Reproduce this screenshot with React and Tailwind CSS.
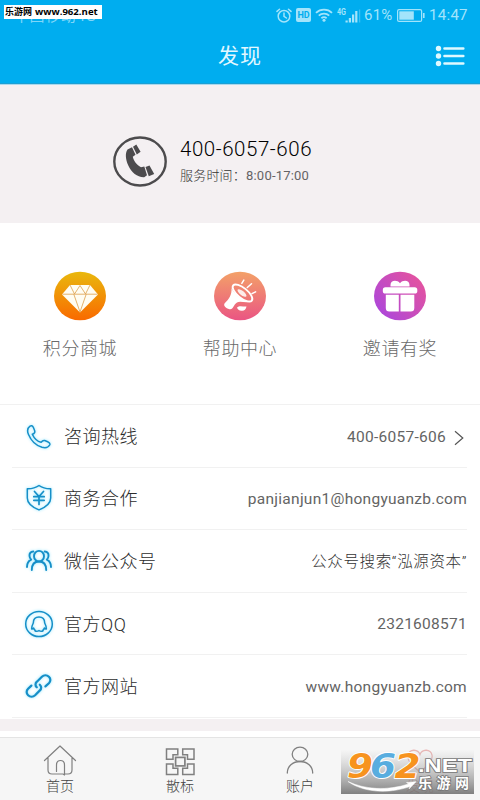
const STACK = "font-['Roboto','Noto_Sans_CJK_SC',sans-serif]"

function StatusBar() {
  return (
    <div className="relative flex h-[30px] items-center justify-end pr-[11px] text-[#a3e4fb]">
      <span className="absolute left-[14px] top-[8px] text-[15px] leading-[17px] tracking-[0.6px] text-[#7fd6f8]">中国移动4G</span>
      <div className="absolute left-[4px] top-[5px] flex h-[14px] w-[98px] items-center whitespace-nowrap bg-white pl-[1px] font-['Open_Sans','Noto_Sans_CJK_SC',sans-serif] text-[9.6px] font-bold leading-[14px] text-black">
        <span className="text-[9px]">乐游网</span>
        <span className="ml-[3px]">www.962.net</span>
      </div>
      <svg className="h-[15px] w-[16px]" viewBox="0 0 16 15" fill="none" stroke="currentColor" strokeWidth="1.5" strokeLinecap="round">
        <circle cx="8" cy="8.2" r="5.8" />
        <path d="M8 5v3.4l2.4 1.6M1 3.4 3.5 1.2M15 3.4 12.5 1.2" />
      </svg>
      <span className="ml-[4px] flex h-[14px] w-[15px] items-center justify-center rounded-[2px] bg-[#a3e4fb] text-[9px] font-bold leading-none tracking-tight text-[#00adef]">HD</span>
      <svg className="ml-[4px] h-[14px] w-[18px]" viewBox="0 0 18 14" fill="none" stroke="currentColor" strokeWidth="1.8">
        <path d="M1 4.8a11.500 11.500 0 0 1 16 0M3.800 7.600a7.600 7.600 0 0 1 10.400 0M6.400 10.200a4 4 0 0 1 5.200 0" />
        <circle cx="9" cy="12.300" r="1.500" fill="currentColor" stroke="none" />
      </svg>
      <svg className="ml-[4px] h-[15px] w-[24px]" viewBox="0 0 24 15" fill="currentColor">
        <text x="0" y="7" fontSize="8.5" fontWeight="700" textLength="9" lengthAdjust="spacingAndGlyphs">4G</text>
        <path d="M8.500 12.500h2.200v2h-2.200zM11.800 10h2.200v4.500h-2.200zM15 6.500h2.200v8h-2.200zM18.200 3h2.200v11.500h-2.200z" />
        <path d="M22.200 1.500h1v13h-1z" opacity=".45" />
      </svg>
      <span className="ml-[3px] w-[29px] text-[15px] leading-none tracking-[0.2px]">61%</span>
      <svg className="ml-[4px] h-[13px] w-[28px]" viewBox="0 0 28 13">
        <rect x=".6" y=".6" width="24" height="11.800" rx="1.500" fill="none" stroke="currentColor" strokeWidth="1.2" />
        <rect x="2.300" y="2.300" width="14.500" height="8.400" fill="currentColor" />
        <path d="M26 4h1.600v5H26z" fill="currentColor" />
      </svg>
      <span className="ml-[4px] w-[40px] whitespace-nowrap text-[15px] leading-none tracking-[0.3px]">14:47</span>
    </div>
  )
}

function Header() {
  return (
    <header className="h-[85px] border-b border-[#a9d9ee] bg-[#00adef] shadow-[inset_0_-1px_0_#1b9fd4]">
      <StatusBar />
      <div className="relative flex h-[54px] items-center justify-center">
        <h1 className="text-[21px] tracking-[1px] text-[#e3f8ff]">发现</h1>
        <svg className="absolute right-[14px] top-[15px] h-[22px] w-[31px]" viewBox="0 0 31 22" fill="#dff9ff">
          <circle cx="3.500" cy="3.500" r="2.700" />
          <circle cx="3.500" cy="11" r="2.700" />
          <circle cx="3.500" cy="18.500" r="2.700" />
          <path d="M9.500 3.500h18.800M9.500 11h18.800M9.500 18.500h18.800" stroke="#dff9ff" strokeWidth="2.600" strokeLinecap="round" />
        </svg>
      </div>
    </header>
  )
}

function ServiceBanner() {
  return (
    <section className="flex h-[138px] items-center bg-[#f4f0f2] pl-[113px] pt-[14px]">
      <svg className="h-[51px] w-[54px]" viewBox="0 0 54 51">
        <ellipse cx="27" cy="25.500" rx="25.700" ry="24" fill="none" stroke="#4c4b4d" strokeWidth="2.400" />
        <path d="M14.500 13.500 19 11.300 22.500 18.800 19.800 20.800C20.600 25 23.800 29 28 31.200L31.300 30.400 34 39.200 31.200 41.200C24.500 41.500 18.500 36.500 15.300 29.500 12.600 23.500 11.900 17 14.500 13.500Z" fill="#4c4b4d" />
        <path d="M20 10.800 23.300 8.600 27.600 15.800 23.800 18.500ZM32.500 31 36.500 29.600 41.200 38 35.800 40.300Z" fill="#4c4b4d" />
      </svg>
      <div className="ml-[13px]">
        <div className="text-[20.5px] font-light leading-[24px] tracking-[0.55px] text-black">400-6057-606</div>
        <div className="mt-[6px] text-[13px] leading-[18px] tracking-[0.2px]"><span className="font-light text-[#333]">服务时间：</span><span className="text-[#656365]">8:00-17:00</span></div>
      </div>
    </section>
  )
}

function DiamondIcon() {
  return (
    <svg className="h-[50px] w-[54px]" viewBox="0 0 54 50">
      <defs>
        <linearGradient id="gold" x1="0" y1="0" x2="0" y2="1">
          <stop offset="0" stopColor="#e9b80d" />
          <stop offset="1" stopColor="#f96a00" />
        </linearGradient>
      </defs>
      <ellipse cx="27" cy="25" rx="26" ry="24.300" fill="url(#gold)" />
      <path d="M17 14h20l8 9.500L27 41.500 9 23.500Z" fill="#fffdf2" />
      <path d="M9.500 23.200h35M17 14l4.500 9 5.500-8.500 5.500 8.500 4.500-9M20.800 23.200 27 41l6.200-17.800" fill="none" stroke="#dda04a" strokeWidth=".8" />
    </svg>
  )
}

function HornIcon() {
  return (
    <svg className="h-[50px] w-[54px]" viewBox="0 0 54 50">
      <defs>
        <linearGradient id="coral" x1="0" y1="0" x2="0" y2="1">
          <stop offset="0" stopColor="#f3a168" />
          <stop offset="1" stopColor="#ea5583" />
        </linearGradient>
      </defs>
      <ellipse cx="27" cy="25" rx="26" ry="24.300" fill="url(#coral)" />
      <path d="M18.500 17C19 24 16 28 11.500 32.500 10.300 34.500 12.500 37.500 16.500 38.200 20.500 39 20 34 24 31.500 27 29.800 31.500 32 36.500 31 28 29 20.500 22 18.500 17Z" fill="#fff" />
      <ellipse cx="29.500" cy="22" rx="12" ry="5" transform="rotate(39 29.500 22)" fill="none" stroke="#fff" strokeWidth="1.900" />
      <ellipse cx="29" cy="22" rx="5.500" ry="2.100" transform="rotate(39 29 22)" fill="#fff" opacity=".85" />
      <path d="M24 36.500C26.500 34 30 35.800 33.500 35.500 33 38.500 31 40.200 28.500 39.800 26 39.500 24.500 38.500 24 36.500Z" fill="#fff" />
      <path d="m28.800 12.300 2-3.200M34.300 16.500l4.200-3.800M39 22.700l3.600-1.800" stroke="#fff" strokeWidth="1.500" strokeLinecap="round" />
    </svg>
  )
}

function GiftIcon() {
  return (
    <svg className="h-[50px] w-[54px]" viewBox="0 0 54 50">
      <defs>
        <linearGradient id="violet" x1="1" y1="0.100" x2="0" y2="0.900">
          <stop offset="0" stopColor="#e9549a" />
          <stop offset="1" stopColor="#a846df" />
        </linearGradient>
      </defs>
      <ellipse cx="27" cy="25" rx="26" ry="24.300" fill="url(#violet)" />
      <path d="M17.500 15.500V14c0-5 6.500-5.500 9.500-1.800C30 8.500 36.500 9 36.500 14v1.500Z" fill="#fff" />
      <rect x="9.800" y="16.300" width="34.500" height="6.200" rx="2.600" fill="#fff" />
      <path d="M12.800 23.700h13v16.800h-9.500a3.500 3.500 0 0 1-3.500-3.500ZM27.500 23.700h13.800V37a3.500 3.500 0 0 1-3.500 3.500H27.500Z" fill="#fff" />
    </svg>
  )
}

const shortcuts = [
  { label: '积分商城', Icon: DiamondIcon },
  { label: '帮助中心', Icon: HornIcon },
  { label: '邀请有奖', Icon: GiftIcon },
]

function Shortcuts() {
  return (
    <section className="grid h-[182px] grid-cols-3 border-b border-[#f1f1f1] pt-[48px]">
      {shortcuts.map(({ label, Icon }) => (
        <div key={label} className="flex flex-col items-center">
          <Icon />
          <span className="mt-[15px] text-[18px] font-light leading-[26px] tracking-[0.6px] text-[#6a6a6a]">{label}</span>
        </div>
      ))}
    </section>
  )
}

function LineIcon({ children }) {
  return (
    <svg className="h-[28px] w-[30px] shrink-0 drop-shadow-[0_0_1.5px_#8fe6ff]" viewBox="0 0 30 28" fill="none" stroke="#168fc8" strokeWidth="1.500" strokeLinejoin="round" strokeLinecap="round">
      {children}
    </svg>
  )
}

const icons = {
  phone: (
    <path d="M6 4.200C3.500 6 3 9 4.500 12.500 7 18.500 12 23.500 18 25.300c3.300.9 6.300.2 7.700-2.300.6-1.300-.3-2.500-2-3.300l-3-1.200c-1.500-.4-2.500.2-3.600 1.800C13.500 19.500 10 16 8.300 12.300 10.800 11.300 11.200 10 10.500 8.300L9.300 5.300C8.500 3.500 7.300 3.200 6 4.200Z" />
  ),
  shield: (
    <>
      <path d="M15 1.500c3.400 2.400 7.300 3.300 11.700 3.200v9.200c0 5.200-5.200 9.300-11.700 12C8.500 23.200 3.300 19.100 3.300 13.900V4.700C7.700 4.800 11.600 3.900 15 1.500Z" />
      <path d="m10.500 7.500 4.500 5 4.500-5M15 12.500v8M9.800 12.700h10.400M9.800 16.300h10.400" strokeWidth="1.700" />
    </>
  ),
  people: (
    <g strokeWidth="1.900">
      <ellipse cx="15" cy="9.200" rx="5" ry="5.300" />
      <path d="M7.800 23c0-5.300 2.700-8.500 7.200-8.500s7.200 3.200 7.200 8.500M9.300 4.500C6.500 4.800 5.300 6.500 5.500 9c.1 1.500.7 2.700 1.700 3.700C4.500 14 3 16.800 3 20M20.700 4.500c2.800.3 4 2 3.800 4.500-.1 1.500-.7 2.700-1.700 3.700 2.700 1.300 4.200 4.100 4.200 7.300" />
    </g>
  ),
  qq: (
    <>
      <ellipse cx="15" cy="14" rx="13.300" ry="12.600" />
      <path d="M15 7c-4 0-5.700 2.900-5.700 6-1 2-2 4-1.700 5.800.6.500 1.400-.1 2-.8.3 1.100.8 1.700 1.600 2.300-.8.700.4 1 1.600 1 1 0 1.600-.3 2.200-.7.600.4 1.200.7 2.200.7 1.200 0 2.400-.3 1.600-1 .8-.6 1.300-1.200 1.600-2.300.6.700 1.400 1.300 2 .8.300-1.800-.7-3.800-1.700-5.800 0-3.100-1.700-6-5.700-6Z" />
    </>
  ),
  link: (
    <g strokeWidth="2.200">
      <path d="m12.800 15.300c-1.800-1.600-1.700-4.100.1-5.600l5-4.900c2-1.900 5-1.900 7 0s1.900 4.500 0 6.400l-3.500 3.200" />
      <path d="m15.800 12.700c1.800 1.600 1.900 4.100.1 5.700l-4.800 4.800c-2 1.900-5 1.900-7 0s-1.900-4.500 0-6.400l3.300-3.200" />
    </g>
  ),
}

const contacts = [
  { icon: 'phone', label: '咨询热线', value: '400-6057-606', arrow: true },
  { icon: 'shield', label: '商务合作', value: 'panjianjun1@hongyuanzb.com' },
  { icon: 'people', label: '微信公众号', value: '公众号搜索“泓源资本”', cjk: true },
  { icon: 'qq', label: '官方QQ', value: '2321608571' },
  { icon: 'link', label: '官方网站', value: 'www.hongyuanzb.com' },
]

function ContactList() {
  return (
    <section className="pl-[12px] pr-[13px]">
      {contacts.map((c) => (
        <div key={c.icon} className="flex h-[62.6px] items-center border-b border-[#f1f1f1] pl-[12px]">
          <LineIcon>{icons[c.icon]}</LineIcon>
          <span className="ml-[10px] whitespace-nowrap pt-[1px] text-[18px] font-light tracking-[0.5px] text-[#2c2c2c]">{c.label}</span>
          <span className={`ml-auto whitespace-nowrap pt-[3px] text-[15.5px] ${c.cjk ? 'font-light tracking-[0.64px] text-[#333]' : 'tracking-[0.27px] text-[#646464]'}`}>{c.value}</span>
          {c.arrow && (
            <svg className="ml-[8px] mr-[3px] mt-[4px] h-[16px] w-[10px]" viewBox="0 0 10 16" fill="none" stroke="#555" strokeWidth="1.200">
              <path d="m1 1.200 7.800 6.800L1 14.800" />
            </svg>
          )}
        </div>
      ))}
    </section>
  )
}

function HomeIcon() {
  return (
    <svg className="h-[32px] w-[34px]" viewBox="0 0 34 32" fill="none" stroke="#808080" strokeWidth="1.200" strokeLinecap="round" strokeLinejoin="round">
      <path d="M1.500 16.500 17 2l15.500 14.500M5 14v12c0 2.500 1.200 4 4 4h11l1.500 1V21c0-2.800-1.500-4.500-4-4.500s-4 1.700-4 4.500v6.500M21.500 30H25c2.800 0 4-1.500 4-4V14" />
    </svg>
  )
}

function GridIcon() {
  return (
    <svg className="h-[32px] w-[34px]" viewBox="0 0 34 32" fill="none" stroke="#808080" strokeWidth="1.500">
      <path d="M3.500 5h11.300v5.800H10v4.500H3.500ZM19.700 5H31v10.300h-6.500v-4.500h-4.800ZM3.500 20H10v4.300h4.800V30.500H3.500ZM24.500 20H31v10.500H19.700v-6.200h4.800Z" />
      <rect x="12.600" y="13.400" width="9.300" height="8.500" strokeWidth="1.700" />
    </svg>
  )
}

function UserIcon() {
  return (
    <svg className="h-[32px] w-[34px]" viewBox="0 0 34 32" fill="none" stroke="#808080" strokeWidth="1.300" strokeLinecap="round">
      <ellipse cx="17" cy="10.300" rx="7.800" ry="7.200" />
      <path d="M4.300 29c0-6.500 5.300-11.500 12.700-11.500S29.700 22.500 29.700 29" />
    </svg>
  )
}

function HeartIcon() {
  return (
    <svg className="h-[32px] w-[34px]" viewBox="0 0 34 32" fill="none" stroke="#db6b68" strokeWidth="1.200">
      <path d="M17 10.500C15 5 6.500 5 5 11c-1.300 7 6 12 12 17 6-5 13.300-10 12-17-1.500-6-10-6-12-.5Z" />
    </svg>
  )
}

const tabs = [
  { label: '首页', Icon: HomeIcon },
  { label: '散标', Icon: GridIcon },
  { label: '账户', Icon: UserIcon },
  { label: '发现', Icon: HeartIcon, active: true },
]

function TabBar() {
  return (
    <nav className="grid h-[63px] grid-cols-4 border-t border-[#e4e4e4] bg-[#f6f6f6] pt-[6px]">
      {tabs.map(({ label, Icon, active }) => (
        <div key={label} className="flex flex-col items-center">
          <Icon />
          <span className={`mt-px text-[14px] font-light leading-[18px] ${active ? 'text-[#c4423d]' : 'text-[#444]'}`}>{label}</span>
        </div>
      ))}
    </nav>
  )
}

function Watermark() {
  return (
    <svg className="absolute left-[341px] top-[750px] h-[44px] w-[133px]" viewBox="0 0 133 44">
      <defs>
        <linearGradient id="plate" x1="0" y1="0" x2="0" y2="1">
          <stop offset="0" stopColor="#f4f4f4" stopOpacity=".55" />
          <stop offset="1" stopColor="#777" stopOpacity=".93" />
        </linearGradient>
      </defs>
      <rect width="133" height="44" fill="url(#plate)" />
      <g fontFamily="DejaVu Sans" fontWeight="700" fontStyle="italic" fontSize="33" stroke="#fff" strokeWidth="1.800" paintOrder="stroke" strokeLinejoin="round">
        <text x="6" y="28" fill="#f7931e" textLength="26" lengthAdjust="spacingAndGlyphs">9</text>
        <text x="29" y="28" fill="#58addf" textLength="26" lengthAdjust="spacingAndGlyphs">6</text>
        <text x="53.500" y="28" fill="#f7931e" textLength="26" lengthAdjust="spacingAndGlyphs">2</text>
      </g>
      <path d="M7 31.500C22 42 46 44.500 69 36.500l-1 2.500 7-7.300-9.500.8 2 1.500C46 41 24 39.500 7 31.500Z" fill="#fff" stroke="#fff" strokeWidth=".5" />
      <g fill="#fff" stroke="#777" strokeWidth="1.600" paintOrder="stroke" fontWeight="700">
        <text x="77" y="22" fontFamily="Liberation Sans" fontSize="19" textLength="54" lengthAdjust="spacingAndGlyphs">.NET</text>
        <text x="77" y="38" fontFamily="Noto Sans CJK SC" fontSize="14" textLength="51">乐游网</text>
      </g>
    </svg>
  )
}

export default function App() {
  return (
    <div className={`relative flex h-[800px] w-[480px] flex-col overflow-hidden bg-white ${STACK}`}>
      <Header />
      <ServiceBanner />
      <Shortcuts />
      <ContactList />
      <div className="mt-[1px] h-[12px] bg-[#f4f0f2]" />
      <div className="mt-auto">
        <TabBar />
      </div>
      <Watermark />
    </div>
  )
}
